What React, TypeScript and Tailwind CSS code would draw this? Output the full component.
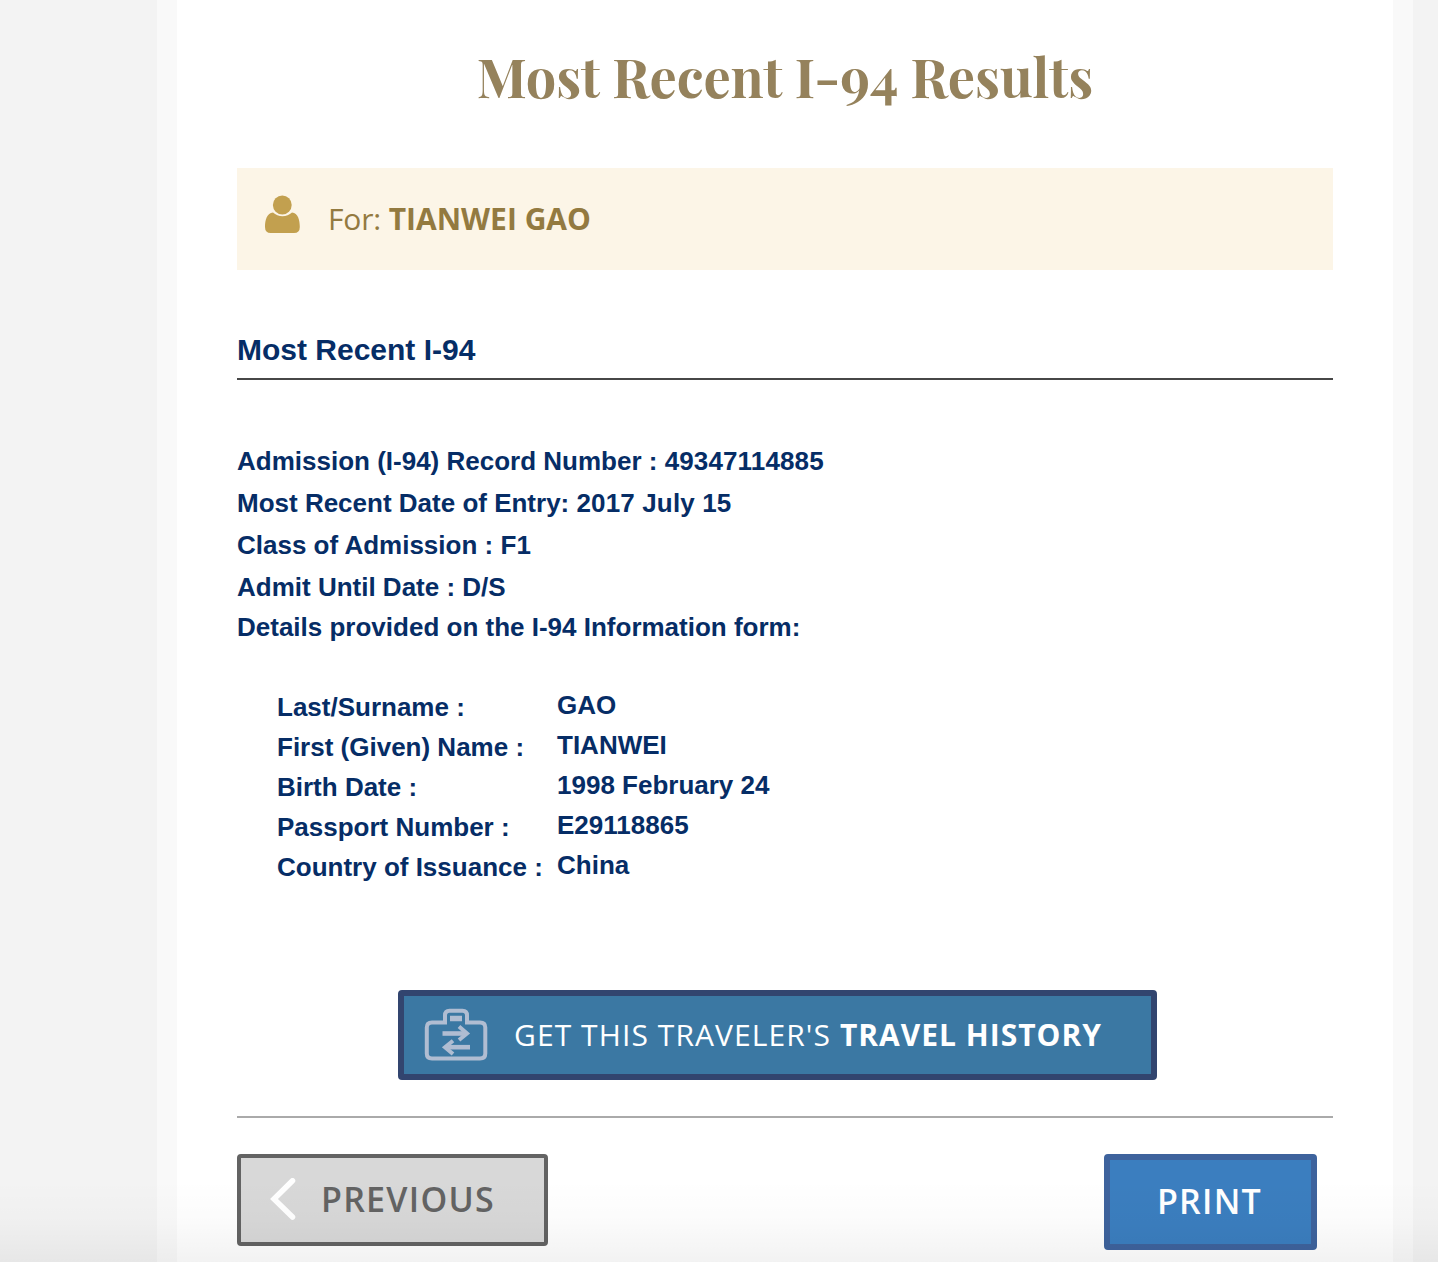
const arial = "font-['Liberation_Sans',Arial,sans-serif]";

const entry: [string, string, string][] = [
  ['Admission (I-94) Record Number : ', '49347114885', 'h-[42px]'],
  ['Most Recent Date of Entry: ', '2017 July 15', 'h-[42px]'],
  ['Class of Admission : ', 'F1', 'h-[42px]'],
  ['Admit Until Date : D/S', '', 'h-[42px]'],
  ['Details provided on the I-94 Information form:', '', 'h-[38px]'],
];

const details: [string, string][] = [
  ['Last/Surname :', 'GAO'],
  ['First (Given) Name :', 'TIANWEI'],
  ['Birth Date :', '1998 February 24'],
  ['Passport Number :', 'E29118865'],
  ['Country of Issuance :', 'China'],
];

function UserIcon() {
  return (
    <svg className="h-[40px] w-[36px]" viewBox="0 0 36 40" fill="#c2a04f">
      <circle cx="17.300" cy="10" r="9.400" />
      <path d="M8 17.600 C13 22.400 22 22.400 27 17.600 C33 18 34.800 25 34.800 32 Q34.800 38 29 38 H5.800 Q0 38 0 32 C0 25 2 18 8 17.600 Z" />
    </svg>
  );
}

function CaseIcon() {
  return (
    <svg className="h-[54px] w-[64px]" viewBox="0 0 64 54" fill="none" stroke="#b0bdd2">
      <path
        d="M21 14.500 V7.500 Q21 2.800 25.500 2.800 H38.500 Q43 2.800 43 7.500 V14.500 H56 Q61.300 14.500 61.300 19.500 V45.500 Q61.300 50.500 56 50.500 H8 Q2.800 50.500 2.800 45.500 V19.500 Q2.800 14.500 8 14.500 Z"
        strokeWidth="4"
      />
      <path d="M26 10.500 H38" strokeWidth="5.500" />
      <path d="M18.500 25.500 H42" strokeWidth="4.600" />
      <path d="M46 39.200 H22" strokeWidth="4.600" />
      <path d="M35 18.500 L43 25.500 L35 32 M29 32.700 L21 39.200 L29 46" strokeWidth="4" />
    </svg>
  );
}

export default function App() {
  return (
    <div className="relative flex h-[1262px] w-[1438px] overflow-hidden bg-[#f3f3f3]">
      <div className="w-[157px] shrink-0 bg-[#f3f3f3]" />
      <main className="flex w-[1256px] shrink-0 flex-col border-x-[20px] border-[#f9f9f9] bg-white px-[60px]">
        <h1 className="h-[168px] shrink-0 pt-[42px] text-center font-['Playfair_Display','Liberation_Serif',serif] text-[54px] leading-[68px] font-bold tracking-[-0.03px] whitespace-nowrap text-[#95825c]">
          Most Recent I-94 Results
        </h1>

        <section className="flex h-[102px] shrink-0 items-center bg-[#fcf5e7] pl-[28px] font-['Open_Sans',sans-serif] text-[30px] text-[#937a40]">
          <div className="pb-[8px]">
            <UserIcon />
          </div>
          <p className="pb-[2px] pl-[27px] whitespace-pre">
            <span className="tracking-[-0.15px]">For: </span>
            <b className="font-bold">TIANWEI GAO</b>
          </p>
        </section>

        <h2 className={`mt-[60px] flex h-[50px] shrink-0 items-center border-b-2 border-[#474747] pb-[10px] ${arial} text-[30px] font-bold text-[#062d66]`}>
          <span>Most Recent I-94</span>
        </h2>

        <div className={`mt-[60px] ${arial} text-[26px] font-bold text-[#062d66]`}>
          {entry.map(([label, value, height]) => (
            <p key={label} className={`flex items-center whitespace-pre ${height}`}>
              <span>{label}</span>
              <span className="tracking-[0.14px]">{value}</span>
            </p>
          ))}
          <dl className="mt-[41px] pl-[40px]">
            {details.map(([k, v]) => (
              <div key={k} className="flex h-[40px] leading-[40px] whitespace-nowrap">
                <dt className="w-[280px]">{k}</dt>
                <dd className="-mt-[2px]">{v}</dd>
              </div>
            ))}
          </dl>
        </div>

        <button className="mt-[103px] ml-[161px] flex h-[90px] w-[759px] shrink-0 items-center rounded-[4px] border-[6px] border-[#32456f] bg-[#3b78a3] pl-[20px] font-['Open_Sans',sans-serif] text-[30px] text-white">
          <CaseIcon />
          <span className="pb-[2px] pl-[26px] tracking-[1.08px] whitespace-pre">
            GET THIS TRAVELER'S <b className="font-bold tracking-[1px]">TRAVEL HISTORY</b>
          </span>
        </button>

        <hr className="mt-[36px] shrink-0 border-t-2 border-[#aaaaaa]" />

        <div className="mt-[36px] flex items-start justify-between pr-[16px] font-['Open_Sans',sans-serif]">
          <button className="flex h-[92px] w-[311px] items-center rounded-[4px] border-4 border-[#636363] bg-[#d8d8d8] pl-[29px] text-[34px] font-semibold text-[#636363]">
            <svg className="mb-[2px] h-[42px] w-[26px]" viewBox="0 0 26 42" fill="none" stroke="#fff" strokeWidth="5.500">
              <path d="M22.500 2.800 L4 21 L22.500 39" strokeLinecap="round" />
            </svg>
            <span className="pb-[2px] pl-[25px] tracking-[1.25px]">PREVIOUS</span>
          </button>
          <button className="h-[96px] w-[213px] rounded-[4px] border-[6px] border-[#3e639d] bg-[#3b7ebf] pr-[2px] pb-[2px] text-[34px] font-semibold tracking-[1.25px] text-white">
            PRINT
          </button>
        </div>
      </main>
      <div className="pointer-events-none absolute inset-x-0 bottom-0 h-[82px] bg-gradient-to-b from-black/0 via-black/[0.015] to-black/5" />
    </div>
  );
}
